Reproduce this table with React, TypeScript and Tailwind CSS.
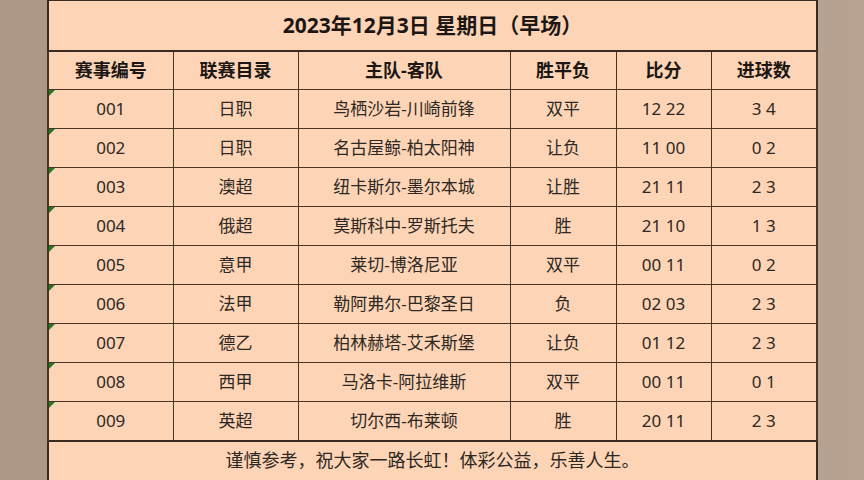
const rows = [
  ["001", "日职", "鸟栖沙岩-川崎前锋", "双平", "12 22", "3 4"],
  ["002", "日职", "名古屋鲸-柏太阳神", "让负", "11 00", "0 2"],
  ["003", "澳超", "纽卡斯尔-墨尔本城", "让胜", "21 11", "2 3"],
  ["004", "俄超", "莫斯科中-罗斯托夫", "胜", "21 10", "1 3"],
  ["005", "意甲", "莱切-博洛尼亚", "双平", "00 11", "0 2"],
  ["006", "法甲", "勒阿弗尔-巴黎圣日", "负", "02 03", "2 3"],
  ["007", "德乙", "柏林赫塔-艾禾斯堡", "让负", "01 12", "2 3"],
  ["008", "西甲", "马洛卡-阿拉维斯", "双平", "00 11", "0 1"],
  ["009", "英超", "切尔西-布莱顿", "胜", "20 11", "2 3"],
];

const headers = ["赛事编号", "联赛目录", "主队-客队", "胜平负", "比分", "进球数"];

export default function App() {
  return (
    <div
      className="h-[480px] w-[864px] overflow-hidden bg-gradient-to-r from-[#ad9684] via-[#b29c8a] to-[#b7a291]"
      style={{ fontFamily: '"Noto Sans", "Noto Sans CJK SC", sans-serif' }}
    >
      <div className="ml-[47px] w-[771px] border-r-2 border-[#e9d6c6]">
        <table className="w-[769px] table-fixed border-collapse whitespace-nowrap bg-[#fdd5b6] text-[#2e2824]">
          <colgroup>
            <col className="w-[125px]" />
            <col className="w-[125px]" />
            <col className="w-[212px]" />
            <col className="w-[106px]" />
            <col className="w-[95px]" />
            <col className="w-[106px]" />
          </colgroup>
          <thead>
            <tr className="h-[50px]">
              <th colSpan={6} className="border-2 border-t-[1px] border-[#3b2a20] p-0 text-[21px] font-bold text-[#1c1714]">
                2023年12月3日 星期日（早场）
              </th>
            </tr>
            <tr className="h-[39px]">
              {headers.map((h, i) => (
                <th
                  key={h}
                  className={`border border-[#4a3426] p-0 text-[18px] font-bold text-[#1c1714] ${i === 0 ? "border-l-2" : ""} ${i === 5 ? "border-r-2" : ""}`}
                >
                  {h}
                </th>
              ))}
            </tr>
          </thead>
          <tbody>
            {rows.map((r) => (
              <tr key={r[0]} className="h-[39px]">
                {r.map((c, i) => (
                  <td
                    key={i}
                    className={`border border-[#4a3426] p-0 text-center text-[17px] ${i === 0 ? "relative border-l-2" : ""} ${i === 5 ? "border-r-2" : ""}`}
                  >
                    {i === 0 && (
                      <span className="absolute left-0 top-0 h-0 w-0 border-r-[6px] border-t-[6px] border-r-transparent border-t-[#1f7a22]" />
                    )}
                    {c}
                  </td>
                ))}
              </tr>
            ))}
            <tr className="h-[40px]">
              <td colSpan={6} className="border-2 border-[#3b2a20] p-0 text-center text-[18px]">
                谨慎参考，祝大家一路长虹！体彩公益，乐善人生。
              </td>
            </tr>
          </tbody>
        </table>
      </div>
    </div>
  );
}
